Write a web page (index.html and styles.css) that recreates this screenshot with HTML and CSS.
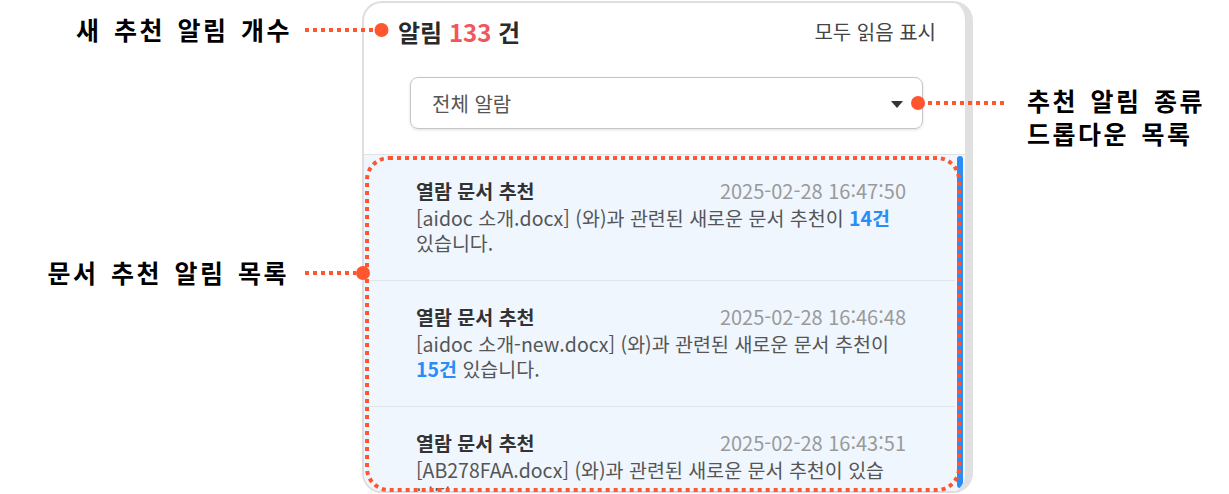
FILE: index.html
```html
<!DOCTYPE html>
<html lang="ko">
<head>
<meta charset="utf-8">
<title>알림</title>
<link rel="stylesheet" href="styles.css">
</head>
<body>
<div class="stage">
  <section class="panel">
    <header class="panel-head">
      <div class="count">알림 <span class="num">133</span> 건</div>
      <div class="read-all">모두 읽음 표시</div>
    </header>
    <div class="filter">
      <div class="select">
        <span class="select-label">전체 알람</span>
        <span class="caret"></span>
      </div>
    </div>
    <div class="list">
      <div class="items">
        <article class="item">
          <div class="item-top"><span class="item-title">열람 문서 추천</span><span class="item-time">2025-02-28 16:47:50</span></div>
          <p class="item-body">[aidoc 소개.docx] (와)과 관련된 새로운 문서 추천이 <b class="hl">14건</b> 있습니다.</p>
        </article>
        <article class="item">
          <div class="item-top"><span class="item-title">열람 문서 추천</span><span class="item-time">2025-02-28 16:46:48</span></div>
          <p class="item-body">[aidoc 소개-new.docx] (와)과 관련된 새로운 문서 추천이 <b class="hl">15건</b> 있습니다.</p>
        </article>
        <article class="item">
          <div class="item-top"><span class="item-title">열람 문서 추천</span><span class="item-time">2025-02-28 16:43:51</span></div>
          <p class="item-body">[AB278FAA.docx] (와)과 관련된 새로운 문서 추천이 있습니다.</p>
        </article>
      </div>
      <div class="scroll"><div class="thumb"></div></div>
    </div>
  </section>

  <div class="label label-count">새 추천 알림 개수</div>
  <div class="label label-filter">추천 알림 종류<br>드롭다운 목록</div>
  <div class="label label-list">문서 추천 알림 목록</div>

  <svg class="marks" width="1229" height="494" viewBox="0 0 1229 494">
    <g fill="none" stroke="#ff5630" stroke-width="4" stroke-dasharray="4 4">
      <line x1="305" y1="30" x2="373" y2="30"/>
      <line x1="928" y1="103" x2="1008" y2="103"/>
      <line x1="305" y1="273" x2="356" y2="273"/>
      <rect x="367" y="158" width="592" height="332" rx="22" ry="22"/>
    </g>
    <g fill="#ff5630">
      <circle cx="381.5" cy="30" r="7"/>
      <circle cx="918" cy="103" r="7"/>
      <circle cx="363" cy="273" r="7"/>
    </g>
  </svg>
</div>
</body>
</html>
```

FILE: styles.css
```css
* { box-sizing: border-box; }
html, body { margin: 0; padding: 0; background: #fff; }
body {
  font-family: "Noto Sans CJK KR", "Noto Sans", sans-serif;
  color: #333;
}
.stage {
  position: relative;
  width: 1229px;
  height: 494px;
  overflow: hidden;
  background: #fff;
}
.panel {
  margin: 1px 0 0 362px;
  width: 611px;
  height: 492px;
  border: 2px solid #dedede;
  border-right-width: 8px;
  border-right-color: #e0e0e0;
  border-radius: 20px;
  background: #fff;
  display: flex;
  flex-direction: column;
  overflow: hidden;
}
.panel-head {
  height: 58px;
  padding: 0 29px 0 34px;
  display: flex;
  align-items: center;
  justify-content: space-between;
  flex: none;
}
.count {
  font-size: 24px;
  font-weight: 700;
  color: #2a2a2a;
  line-height: 30px;
}
.count .num { color: #f2555c; }
.read-all {
  font-size: 20px;
  color: #444;
  line-height: 26px;
}
.filter {
  flex: none;
  padding: 16px 42px 25px 46px;
}
.select {
  height: 52px;
  border: 1px solid #c6c6c6;
  border-radius: 8px;
  box-shadow: 0 1px 3px rgba(0,0,0,0.12);
  display: flex;
  align-items: center;
  justify-content: space-between;
  padding: 0 19px 0 21px;
}
.select-label {
  font-size: 20px;
  color: #555;
}
.caret {
  width: 0;
  height: 0;
  border-left: 6px solid transparent;
  border-right: 6px solid transparent;
  border-top: 7px solid #333;
  margin-top: 2px;
}
.list {
  flex: 1;
  min-height: 0;
  display: flex;
  border-top: 1px solid #e2e2e2;
  background: #eff6fe;
  overflow: hidden;
}
.items {
  flex: 1;
  min-width: 0;
}
.item {
  padding: 24px 49px 25px 52px;
  border-bottom: 1px solid #e1e5ea;
}
.item-top {
  display: flex;
  justify-content: space-between;
  align-items: center;
  height: 24px;
}
.item-title {
  font-size: 19.5px;
  font-weight: 700;
  color: #333;
  line-height: 24px;
}
.item-time {
  font-size: 20px;
  color: #9a9a9a;
  line-height: 24px;
}
.item-body {
  margin: 2px 6px 0 0;
  font-size: 19.5px;
  line-height: 25px;
  color: #555;
}
.hl {
  color: #2b8cf6;
  font-weight: 700;
}
.scroll {
  flex: none;
  width: 10px;
  padding: 1px 2px 3px;
  background: #f3f7fb;
}
.thumb {
  height: 100%;
  border-radius: 3px;
  background: #2b8cf6;
}
.label {
  position: absolute;
  font-size: 25px;
  font-weight: 700;
  color: #000;
  letter-spacing: 2.5px;
  word-spacing: 3px;
  line-height: 33px;
  white-space: nowrap;
}
.label-count { right: 937px; top: 13px; text-align: right; }
.label-filter { left: 1027px; top: 84px; }
.label-list { right: 940px; top: 256px; text-align: right; }
.marks {
  position: absolute;
  left: 0;
  top: 0;
  pointer-events: none;
}
```
